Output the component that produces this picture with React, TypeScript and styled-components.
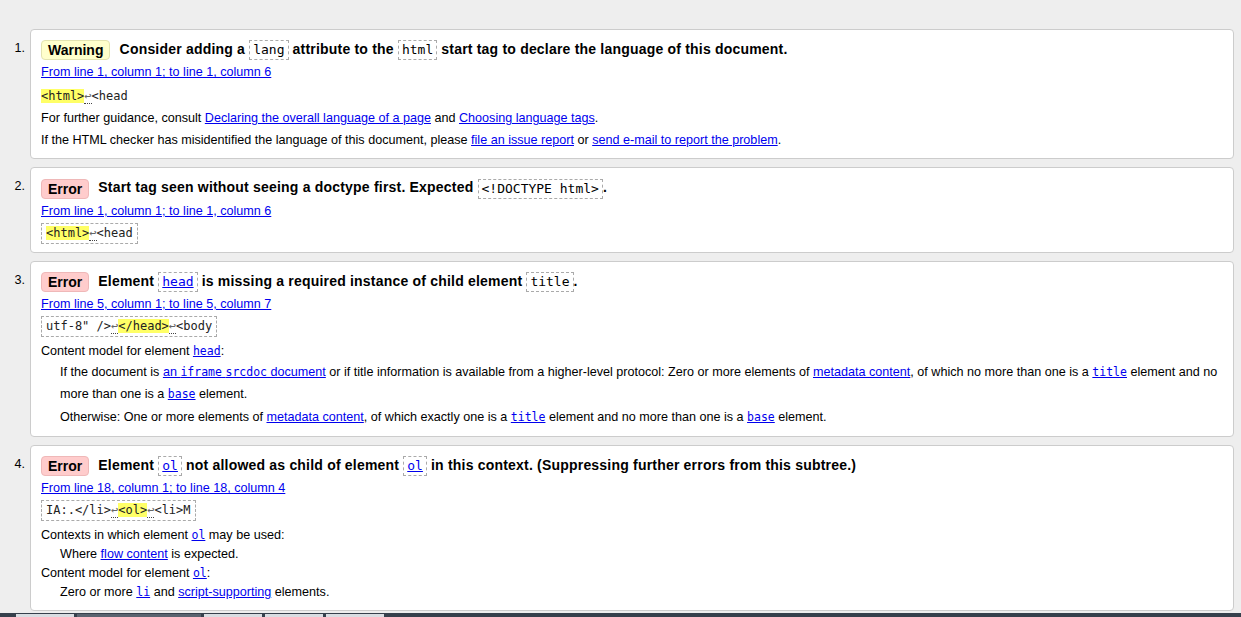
import styled, { createGlobalStyle } from 'styled-components';

const GlobalStyle = createGlobalStyle`
  html, body {
    margin: 0;
    padding: 0;
    background: #eeeeee;
  }
  body {
    font-family: "Liberation Sans", Arial, sans-serif;
    font-size: 12.6px;
    color: #000;
  }
`;

const Page = styled.div`
  height: 617px;
  overflow: hidden;
  padding: 29px 7px 0 0;
  box-sizing: border-box;
  display: flex;
  flex-direction: column;
`;

const MessageList = styled.ol`
  list-style: none;
  margin: 0;
  padding: 0;
  display: flex;
  flex-direction: column;
  gap: 8px;
`;

const MessageItem = styled.li`
  display: flex;
  align-items: flex-start;
`;

const ItemNumber = styled.span`
  width: 25px;
  margin-right: 5px;
  padding-top: 9px;
  line-height: 20px;
  text-align: right;
  flex-shrink: 0;
`;

const Card = styled.div`
  flex: 1;
  background: #fff;
  border: 1px solid #cccccc;
  border-radius: 4px;
  padding: 8px 10px;
`;

const Title = styled.p`
  margin: 0;
  font-weight: bold;
  font-size: 14px;
  letter-spacing: 0.2px;
  line-height: 22px;
`;

const Badge = styled.strong<{ $kind: 'warning' | 'error' }>`
  display: inline-block;
  line-height: 18px;
  padding: 0 6px;
  margin-right: 5px;
  letter-spacing: 0;
  border: 1px solid ${p => (p.$kind === 'warning' ? '#e3e3b0' : '#efb8b8')};
  border-radius: 4px;
  background: ${p => (p.$kind === 'warning' ? '#ffffcc' : '#ffcccc')};
  vertical-align: middle;
`;

const TitleCode = styled.code`
  display: inline-block;
  font-family: "DejaVu Sans Mono", monospace;
  font-weight: normal;
  font-size: 13px;
  letter-spacing: 0;
  line-height: 18px;
  padding: 0 3px;
  border: 1px dashed #aaaaaa;
  vertical-align: middle;
`;

const Location = styled.p`
  margin: 2px 0 0;
  line-height: 20px;
`;

const Link = styled.a`
  color: #0000ee;
  text-decoration: underline;
`;

const Extract = styled.code<{ $boxed?: boolean }>`
  display: inline-block;
  font-family: "DejaVu Sans Mono", monospace;
  font-size: 12px;
  color: #222;
  line-height: ${p => (p.$boxed ? '19px' : '20px')};
  margin-top: ${p => (p.$boxed ? '2px' : '4px')};
  padding: ${p => (p.$boxed ? '0 4px' : '0')};
  border: ${p => (p.$boxed ? '1px dashed #aaaaaa' : 'none')};
  white-space: pre;
`;

const Mark = styled.mark`
  background: #ffff66;
  color: inherit;
`;

const LineBreak = styled.span`
  color: #666;
  border-bottom: 1px dotted #444;
`;

const Text = styled.p`
  margin: 2px 0 0;
  line-height: 20px;
`;

const InlineCode = styled.code`
  font-family: "DejaVu Sans Mono", monospace;
  font-size: 11.5px;
`;

const Definition = styled.dl`
  margin: 5px 0 0;
  line-height: 19px;
`;

const Term = styled.dt`
  margin: 0;
`;

const Detail = styled.dd<{ $spaced?: boolean }>`
  margin: 0 0 0 19px;
  p {
    margin: ${p => (p.$spaced ? '0 0 1px' : '0')};
    line-height: ${p => (p.$spaced ? '22px' : 'inherit')};
  }
  p:last-child {
    margin-bottom: 0;
  }
`;

const Taskbar = styled.div`
  margin-top: auto;
  height: 4px;
  margin-right: -7px;
  background: #36404c;
  display: flex;
  align-items: flex-end;
  padding-left: 16px;
  gap: 3px;
  flex-shrink: 0;
`;

const TaskTab = styled.span<{ $w: number; $dim?: boolean }>`
  width: ${p => p.$w}px;
  height: 3px;
  background: ${p => (p.$dim ? '#5a6470' : '#d9dde2')};
`;

const Lb = () => <LineBreak>↩</LineBreak>;

export default function App() {
  return (
    <>
      <GlobalStyle />
      <Page>
        <MessageList>
          <MessageItem>
            <ItemNumber>1.</ItemNumber>
            <Card>
              <Title>
                <Badge $kind="warning">Warning</Badge> Consider adding a <TitleCode>lang</TitleCode> attribute to the{' '}
                <TitleCode>html</TitleCode> start tag to declare the language of this document.
              </Title>
              <Location>
                <Link href="#l1">From line 1, column 1; to line 1, column 6</Link>
              </Location>
              <div>
                <Extract>
                  <Mark>&lt;html&gt;</Mark>
                  <Lb />
                  &lt;head
                </Extract>
              </div>
              <Text>
                For further guidance, consult <Link href="#d">Declaring the overall language of a page</Link> and{' '}
                <Link href="#c">Choosing language tags</Link>.
              </Text>
              <Text>
                If the HTML checker has misidentified the language of this document, please{' '}
                <Link href="#i">file an issue report</Link> or <Link href="#m">send e-mail to report the problem</Link>.
              </Text>
            </Card>
          </MessageItem>

          <MessageItem>
            <ItemNumber>2.</ItemNumber>
            <Card>
              <Title>
                <Badge $kind="error">Error</Badge> Start tag seen without seeing a doctype first. Expected{' '}
                <TitleCode>&lt;!DOCTYPE html&gt;</TitleCode>.
              </Title>
              <Location>
                <Link href="#l2">From line 1, column 1; to line 1, column 6</Link>
              </Location>
              <div>
                <Extract $boxed>
                  <Mark>&lt;html&gt;</Mark>
                  <Lb />
                  &lt;head
                </Extract>
              </div>
            </Card>
          </MessageItem>

          <MessageItem>
            <ItemNumber>3.</ItemNumber>
            <Card>
              <Title>
                <Badge $kind="error">Error</Badge> Element{' '}
                <TitleCode>
                  <Link href="#head">head</Link>
                </TitleCode>{' '}
                is missing a required instance of child element <TitleCode>title</TitleCode>.
              </Title>
              <Location>
                <Link href="#l3">From line 5, column 1; to line 5, column 7</Link>
              </Location>
              <div>
                <Extract $boxed>
                  utf-8" /&gt;
                  <Lb />
                  <Mark>&lt;/head&gt;</Mark>
                  <Lb />
                  &lt;body
                </Extract>
              </div>
              <Definition>
                <Term>
                  Content model for element{' '}
                  <Link href="#head">
                    <InlineCode>head</InlineCode>
                  </Link>
                  :
                </Term>
                <Detail $spaced>
                  <p>
                    If the document is{' '}
                    <Link href="#srcdoc">
                      an <InlineCode>iframe</InlineCode> <InlineCode>srcdoc</InlineCode> document
                    </Link>{' '}
                    or if title information is available from a higher-level protocol: Zero or more elements of{' '}
                    <Link href="#meta">metadata content</Link>, of which no more than one is a{' '}
                    <Link href="#title">
                      <InlineCode>title</InlineCode>
                    </Link>{' '}
                    element and no more than one is a{' '}
                    <Link href="#base">
                      <InlineCode>base</InlineCode>
                    </Link>{' '}
                    element.
                  </p>
                  <p>
                    Otherwise: One or more elements of <Link href="#meta">metadata content</Link>, of which exactly one
                    is a{' '}
                    <Link href="#title">
                      <InlineCode>title</InlineCode>
                    </Link>{' '}
                    element and no more than one is a{' '}
                    <Link href="#base">
                      <InlineCode>base</InlineCode>
                    </Link>{' '}
                    element.
                  </p>
                </Detail>
              </Definition>
            </Card>
          </MessageItem>

          <MessageItem>
            <ItemNumber>4.</ItemNumber>
            <Card>
              <Title>
                <Badge $kind="error">Error</Badge> Element{' '}
                <TitleCode>
                  <Link href="#ol">ol</Link>
                </TitleCode>{' '}
                not allowed as child of element{' '}
                <TitleCode>
                  <Link href="#ol">ol</Link>
                </TitleCode>{' '}
                in this context. (Suppressing further errors from this subtree.)
              </Title>
              <Location>
                <Link href="#l4">From line 18, column 1; to line 18, column 4</Link>
              </Location>
              <div>
                <Extract $boxed>
                  IA:.&lt;/li&gt;
                  <Lb />
                  <Mark>&lt;ol&gt;</Mark>
                  <Lb />
                  &lt;li&gt;M
                </Extract>
              </div>
              <Definition>
                <Term>
                  Contexts in which element{' '}
                  <Link href="#ol">
                    <InlineCode>ol</InlineCode>
                  </Link>{' '}
                  may be used:
                </Term>
                <Detail>
                  Where <Link href="#flow">flow content</Link> is expected.
                </Detail>
                <Term>
                  Content model for element{' '}
                  <Link href="#ol">
                    <InlineCode>ol</InlineCode>
                  </Link>
                  :
                </Term>
                <Detail>
                  Zero or more{' '}
                  <Link href="#li">
                    <InlineCode>li</InlineCode>
                  </Link>{' '}
                  and <Link href="#script">script-supporting</Link> elements.
                </Detail>
              </Definition>
            </Card>
          </MessageItem>
        </MessageList>
        <Taskbar>
          <TaskTab $w={58} />
          <TaskTab $w={124} $dim />
          <TaskTab $w={58} />
          <TaskTab $w={58} />
          <TaskTab $w={58} />
        </Taskbar>
      </Page>
    </>
  );
}
